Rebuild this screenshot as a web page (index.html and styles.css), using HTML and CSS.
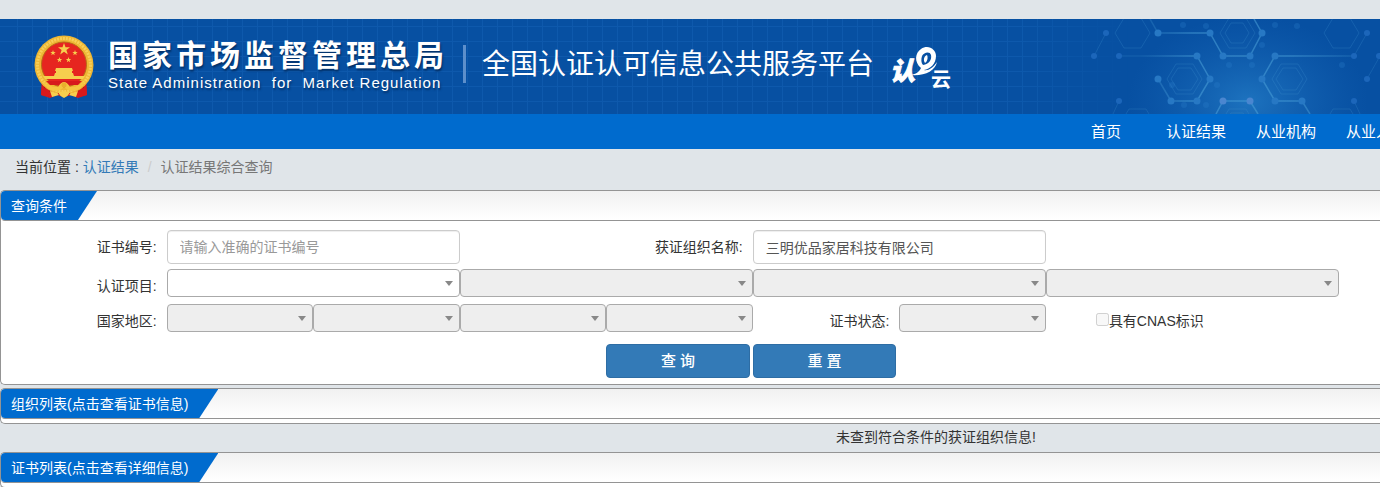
FILE: index.html
```html
<!DOCTYPE html>
<html lang="zh-CN">
<head>
<meta charset="utf-8">
<title>认证结果综合查询</title>
<link rel="stylesheet" href="styles.css">
</head>
<body>
<header class="banner">
  <svg class="molecules" viewBox="0 0 300 95" aria-hidden="true">
    <defs>
      <radialGradient id="glow" cx="0.5" cy="0.5" r="0.5">
        <stop offset="0" stop-color="#2f8fd6" stop-opacity="0.55"/>
        <stop offset="1" stop-color="#1d6fc0" stop-opacity="0"/>
      </radialGradient>
      <linearGradient id="fade" gradientUnits="userSpaceOnUse" x1="60" y1="0" x2="274" y2="0">
        <stop offset="0" stop-color="#4aa0d8" stop-opacity="0.15"/>
        <stop offset="0.250" stop-color="#4aa0d8" stop-opacity="0.55"/>
        <stop offset="0.700" stop-color="#4aa0d8" stop-opacity="0.55"/>
        <stop offset="1" stop-color="#4aa0d8" stop-opacity="0.2"/>
      </linearGradient>
    </defs>
    <ellipse cx="168" cy="82" rx="120" ry="85" fill="url(#glow)"/>
    <g fill="none" stroke="#4a9ad8" stroke-opacity="0.22">
      <path d="M87 60l9-15h17l9 15-9 15H96zM91 60l7-11h13l7 11-7 11H98z"/>
      <path d="M192 60l9-15h17l9 15-9 15h-17zM196 60l7-11h13l7 11-7 11h-13z"/>
      <path d="M140 14l9-15h17l9 15-9 15h-17zM145 14l6-10h12l6 10-6 10h-12z"/>
      <path d="M140 105l9-15h17l9 15M145 103l6-9h12l6 9"/>
      <path d="M244 14l9-15h17l9 15-9 15h-17zM35 14l9-15h17l9 15-9 15H44z"/>
      <path d="M244 105l9-15h17l9 15M40 105l9-15h17l9 15"/>
      <path d="M26 14L14 37M287 14l-13 23M287 60l13-23M274 82l6 13M39 82l-6 13"/>
    </g>
    <g fill="none" stroke="url(#fade)" stroke-width="1.5">
      <path d="M70 0l8 14h52l13 23h27l12-23-8-14"/>
      <path d="M39 37h78l13 23-13 22H91L78 60"/>
      <path d="M274 37h-79l-13 23 13 22h27l8 13"/>
      <path d="M136 95l7-13h27l8 13"/>
    </g>
    <g fill="#2778c4">
      <circle cx="78" cy="14" r="3.5"/><circle cx="130" cy="14" r="3.5"/><circle cx="182" cy="14" r="3.5"/>
      <circle cx="117" cy="37" r="3.5"/><circle cx="143" cy="37" r="3.5"/><circle cx="170" cy="37" r="3.5"/><circle cx="195" cy="37" r="3.5"/>
      <circle cx="78" cy="60" r="3.5"/><circle cx="130" cy="60" r="3.5"/><circle cx="182" cy="60" r="3.5"/>
      <circle cx="91" cy="82" r="3.5"/><circle cx="117" cy="82" r="3.5"/><circle cx="195" cy="82" r="3.5"/><circle cx="222" cy="82" r="3.5"/>
    </g>
    <g fill="#4a86d0"><circle cx="143" cy="82" r="3.5"/><circle cx="170" cy="82" r="3.5"/></g>
    <g fill="#1c66ba">
      <circle cx="26" cy="14" r="3"/><circle cx="287" cy="14" r="3"/><circle cx="39" cy="37" r="3"/><circle cx="274" cy="37" r="3"/>
      <circle cx="287" cy="60" r="3"/><circle cx="39" cy="82" r="3"/><circle cx="274" cy="82" r="3"/><circle cx="14" cy="37" r="3"/><circle cx="299" cy="37" r="3"/>
    </g>
    <g fill="#2a7dc9" fill-opacity="0.3">
      <circle cx="182" cy="26" r="3"/><circle cx="149" cy="46" r="3"/><circle cx="172" cy="46" r="3"/><circle cx="137" cy="66" r="3"/>
      <circle cx="92" cy="66" r="3"/><circle cx="126" cy="86" r="3"/><circle cx="104" cy="86" r="3"/><circle cx="195" cy="6" r="3"/>
      <circle cx="217" cy="7" r="3"/><circle cx="262" cy="46" r="3"/><circle cx="103" cy="6" r="3"/><circle cx="126" cy="7" r="3"/>
    </g>
  </svg>
  <svg class="emblem" viewBox="0 0 60 64" role="img" aria-label="国徽">
    <path d="M8 42L7 60l9 3 7-3 7 2 7-2 7 3 9-3-1-18z" fill="#d7191c"/>
    <path d="M11 49l-1 11M16 53l-1 9M49 49l1 11M44 53l1 9" stroke="#9e1014" fill="none"/>
    <circle cx="30" cy="30" r="29.5" fill="#eeb634"/>
    <circle cx="30" cy="30" r="26.5" fill="none" stroke="#f8cf58" stroke-width="3" stroke-dasharray="2 1"/>
    <circle cx="30" cy="29.500" r="22.500" fill="#e62520" stroke="#b96a17"/>
    <path d="M30 8l1.500 4.300h4.500l-3.600 2.700 1.400 4.400-3.800-2.700-3.800 2.700 1.400-4.400-3.600-2.700h4.500z" fill="#f6cf4e"/>
    <g fill="#f6cf4e">
      <path d="M19 15l.7 2h2l-1.600 1.200.6 2-1.700-1.200-1.700 1.200.6-2-1.600-1.200h2z"/>
      <path d="M41 15l.7 2h2l-1.600 1.200.6 2-1.700-1.200-1.700 1.200.6-2-1.600-1.200h2z"/>
      <path d="M25.500 22l.7 2h2l-1.600 1.200.6 2-1.700-1.200-1.700 1.200.6-2-1.600-1.200h2z"/>
      <path d="M34.500 22l.7 2h2l-1.600 1.200.6 2-1.700-1.200-1.700 1.200.6-2-1.600-1.200h2z"/>
      <path d="M22 33h16l1 3h-1v2h1l1 3H20l1-3h1v-2h-1z"/>
      <path d="M9 41h42l-2 3H11z"/>
    </g>
    <path d="M12 46h36l-4 4H16z" fill="#d7191c"/>
    <path d="M8 45q8 8 16 7 3-5 6-5t6 5q8 1 16-7-4 10-13 11-5 0-9-4-4 4-9 4-9-1-13-11z" fill="#f4c540"/>
    <path d="M8 50q5 7 14 8l-6 4-9-2zM52 50q-5 7-14 8l6 4 9-2z" fill="#d7191c"/>
    <path d="M16 56l7 2 7-2 7 2 7-2-2 6-7-2-5 3-5-3-7 2z" fill="#f6cf4e"/>
    <circle cx="30" cy="50" r="2.500" fill="#e9ae2c"/>
    <path d="M24 58l2 3M36 58l-2 3" stroke="#d7191c"/>
  </svg>
  <div class="agency">
    <div class="agency-cn">国家市场监督管理总局</div>
    <div class="agency-en">State Administration&nbsp; for&nbsp; Market Regulation</div>
  </div>
  <div class="divider"></div>
  <h1 class="platform">全国认证认可信息公共服务平台</h1>
  <svg class="cloud-logo" viewBox="0 0 62 46" role="img" aria-label="认e云">
    <g fill="#fff">
      <text class="logo-ren" x="0" y="34">认</text>
      <text class="logo-yun" x="41" y="41">云</text>
      <path d="M21 29C26 28 29 26 31 22 24 16 25 7 31 3 38-2 46 3 46 10 46 18 40 23 34 24 38 25 43 22 47 16 45 25 35 30 21 29zM33 19C39 18 42 14 41 9 40 5 34 6 32 10 31 13 31 17 33 19zM35 17C38 15 38 11 37 9 34 10 33 14 35 17z"/>
    </g>
  </svg>
</header>
<nav class="nav">
  <a href="#">首页</a>
  <a href="#">认证结果</a>
  <a href="#">从业机构</a>
  <a href="#">从业人员</a>
</nav>
<div class="crumbs">当前位置 : <a href="#">认证结果</a><span class="slash">/</span><span class="current">认证结果综合查询</span></div>

<main>
  <section class="panel">
    <div class="panel-head"><h2 class="tab">查询条件</h2></div>
    <form class="query">
      <div class="row row-text">
        <label class="label" for="cert">证书编号:</label>
        <input class="field span2" id="cert" type="text" placeholder="请输入准确的证书编号">
        <label class="label span2" for="org">获证组织名称:</label>
        <input class="field span2" id="org" type="text" value="三明优品家居科技有限公司">
      </div>
      <div class="row">
        <label class="label" for="item1">认证项目:</label>
        <div class="pick span2"><select id="item1"><option></option></select></div>
        <div class="pick span2"><select disabled aria-label="认证项目二级"><option></option></select></div>
        <div class="pick span2"><select disabled aria-label="认证项目三级"><option></option></select></div>
        <div class="pick span2"><select disabled aria-label="认证项目四级"><option></option></select></div>
      </div>
      <div class="row row-region">
        <label class="label" for="area1">国家地区:</label>
        <div class="pick"><select id="area1" disabled><option></option></select></div>
        <div class="pick"><select disabled aria-label="省"><option></option></select></div>
        <div class="pick"><select disabled aria-label="市"><option></option></select></div>
        <div class="pick"><select disabled aria-label="县"><option></option></select></div>
        <label class="label" for="status">证书状态:</label>
        <div class="pick"><select id="status" disabled><option></option></select></div>
        <div class="check span2"><input id="cnas" type="checkbox" disabled><label for="cnas">具有CNAS标识</label></div>
      </div>
      <div class="row">
        <button class="btn btn-query" type="button">查 询</button>
        <button class="btn" type="button">重 置</button>
      </div>
    </form>
  </section>

  <section class="panel panel-empty">
    <div class="panel-head"><h2 class="tab">组织列表(点击查看证书信息)</h2></div>
  </section>
  <p class="message">未查到符合条件的获证组织信息!</p>

  <section class="panel panel-empty">
    <div class="panel-head"><h2 class="tab">证书列表(点击查看详细信息)</h2></div>
  </section>
</main>
</body>
</html>
```
FILE: styles.css
```css
* { box-sizing: border-box; }

body {
  margin: 0;
  padding-top: 19px;
  overflow: hidden;
  background: #e0e5e9;
  color: #333;
  font: 14px/20px "Liberation Sans", "Noto Sans CJK SC", sans-serif;
}

a { color: #337ab7; text-decoration: none; }

/* Banner */
.banner {
  position: relative;
  display: flex;
  align-items: flex-start;
  height: 95px;
  padding: 16px 0 0 34px;
  overflow: hidden;
  background: #0750a2;
  color: #fff;
  white-space: nowrap;
}
.banner::before {
  content: "";
  position: absolute;
  inset: 0 250px 0 0;
  background:
    repeating-linear-gradient(90deg, transparent 0 14px, #1360b3 14px 15px),
    repeating-linear-gradient(180deg, transparent 0 14px, #1360b3 14px 15px);
  background-position: 3px 0, 0 -7px;
  opacity: 0.6;
  mask-image: linear-gradient(90deg, #000 90%, transparent);
}
.banner > * { position: relative; flex: none; }
.banner .molecules {
  position: absolute;
  top: 0;
  right: 0;
  width: 300px;
  height: 95px;
}
.emblem { width: 60px; height: 64px; }
.agency { margin: 1px 0 0 14px; text-shadow: 1px 2px 2px #033067; }
.agency-cn {
  font-size: 30px;
  font-weight: 700;
  line-height: 40px;
  letter-spacing: 4px;
}
.agency-en {
  font-size: 15px;
  line-height: 14px;
  letter-spacing: 1px;
}
.divider {
  width: 3px;
  height: 38px;
  margin: 10px 16px 0 15px;
  background: #5d8fcb;
}
.platform {
  margin: 10px 0 0;
  font-size: 28px;
  font-weight: 400;
  line-height: 40px;
}
.cloud-logo { width: 62px; height: 46px; margin: 11px 0 0 16px; overflow: visible; }
.logo-ren {
  font: italic 900 25px "Noto Sans CJK SC", sans-serif;
  stroke: #fff;
}
.logo-yun { font: 700 20px "Noto Sans CJK SC", sans-serif; }

/* Navigation */
.nav {
  display: flex;
  height: 35px;
  padding-left: calc(100% - 319px);
  overflow: hidden;
  background: #006bce;
}
.nav a {
  flex: none;
  width: 90px;
  color: #fff;
  font-size: 15px;
  line-height: 36px;
  text-align: center;
}

.crumbs { padding: 8px 15px 13px; }
.slash { padding: 0 9px; color: #ccc; }
.current { color: #777; }

/* Panels: they run on past the right edge of the window */
.panel {
  margin-bottom: 3px;
  border: 1px solid #949494;
  border-right: 0;
  border-radius: 5px 0 0 5px;
  background: #fff;
}
.panel-head {
  display: flex;
  height: 30px;
  border-bottom: 1px solid #949494;
  border-radius: 4px 0 0 4px;
  background: linear-gradient(#f1f1f1, #fff);
}
.tab {
  margin: 0;
  padding: 0 30px 0 10px;
  border-radius: 4px 0 0 4px;
  background: #006bce;
  clip-path: polygon(0 0, 100% 0, calc(100% - 19px) 100%, 0 100%);
  color: #fff;
  font-size: 14px;
  font-weight: 400;
  line-height: 31px;
}
.panel-empty { margin: 0; padding-bottom: 4px; }
.message {
  margin: 0;
  padding: 3px 0 5px 492px;
  text-align: center;
}

/* Query form */
.query { padding: 9px 41px 6px 19px; }
.row {
  display: grid;
  grid-template-columns: repeat(9, minmax(0, 1fr));
  align-items: start;
  min-height: 35px;
}
.row-text { min-height: 39px; }
.row-region { min-height: 40px; }
.row:last-child { min-height: 34px; }
.span2 { grid-column: span 2; }
.label { padding: 7px 10px 0 0; text-align: right; }
.field {
  width: 100%;
  height: 34px;
  padding: 6px 12px;
  border: 1px solid #ccc;
  border-radius: 4px;
  background: #fff;
  box-shadow: inset 0 1px 1px #eee;
  color: #555;
  font: inherit;
}
.field::placeholder { color: #999; opacity: 1; }
.pick { position: relative; }
.pick::after {
  content: "";
  position: absolute;
  top: 12px;
  right: 7px;
  border: 4px solid transparent;
  border-top: 5px solid #888;
  border-bottom: 0;
  pointer-events: none;
}
.pick select {
  display: block;
  width: 100%;
  height: 28px;
  border: 1px solid #aaa;
  border-radius: 4px;
  background: #fff;
  appearance: none;
  font: inherit;
}
.pick select:disabled { background: #eee; opacity: 1; }
.check { display: flex; padding: 7px 0 0 50px; }
.check input { width: 13px; height: 13px; margin: 2px 0 0; }
.btn {
  height: 34px;
  margin-right: 3px;
  padding: 0;
  border: 1px solid #2e6da4;
  border-radius: 4px;
  background: #337ab7;
  color: #fff;
  font: 500 15px/20px "Liberation Sans", "Noto Sans CJK SC", sans-serif;
}
.btn-query { grid-column: 5; }
.btn-query + .btn { grid-column: 6; }
```
